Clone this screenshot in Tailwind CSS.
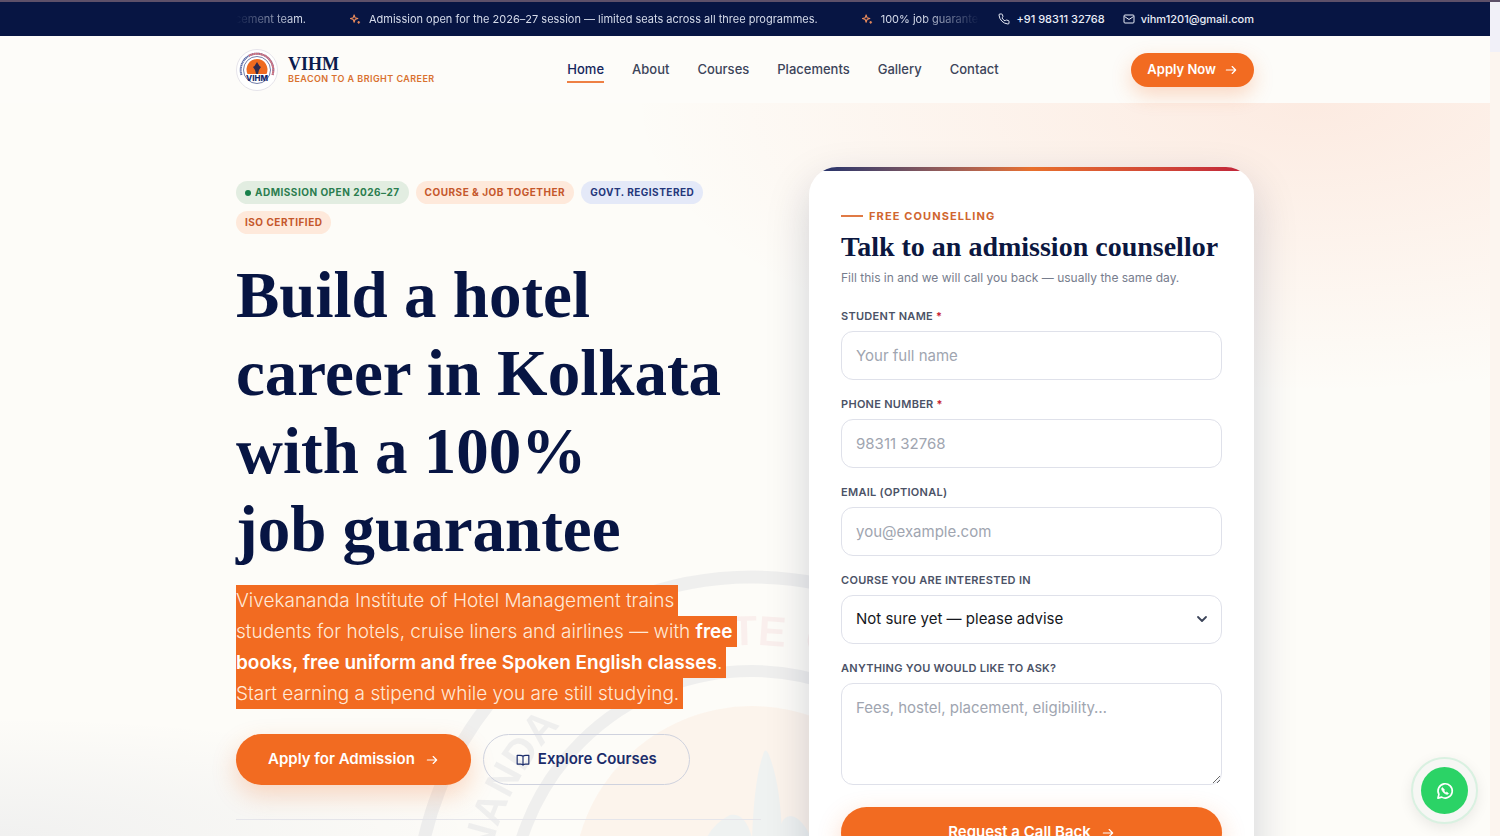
<!DOCTYPE html>
<html lang="en">
<head>
  <meta charset="UTF-8" />
  <meta name="viewport" content="width=device-width, initial-scale=1" />
  <title>VIHM - Beacon to a Bright Career</title>
  <script src="https://cdn.jsdelivr.net/npm/@tailwindcss/browser@4"></script>
  <style>
    body { font-family: 'Inter', 'Liberation Sans', sans-serif; }
    h1, h2, .serif { font-family: 'Liberation Serif', serif; }
    .ticker { mask-image: linear-gradient(90deg, transparent, #000 8%, #000 92%, transparent); }
    .hero {
      background:
        radial-gradient(680px 290px at 88% 0%, rgba(248, 110, 60, 0.12), transparent 100%),
        radial-gradient(520px 120px at 0% 100%, rgba(12, 30, 90, 0.05), transparent 100%),
        #fdfcf8;
    }
  </style>
</head>
<body class="bg-[#fdfcf8] text-[#3c4459]">
  <div class="h-screen flex flex-col overflow-hidden">
    <div class="h-[2px] shrink-0 bg-[#5d5069]"></div>
    <div class="flex flex-1 min-h-0">
      <div class="flex-1 min-w-0 flex flex-col overflow-hidden">

        <!-- Announcement bar -->
        <div class="bg-[#071543] text-[#d5dbea] shrink-0">
          <div class="max-w-[1018px] mx-auto h-[34px] flex items-center gap-[18px] text-[11px]">
            <div class="ticker flex-1 min-w-0 overflow-hidden flex justify-start gap-11 whitespace-nowrap">
              <span class="w-[70px] shrink-0 flex justify-end">placement team.</span>
              <span class="flex shrink-0 items-center gap-2">
                <svg class="size-[11px] text-[#e88a5c]" viewBox="0 0 24 24" fill="none" stroke="currentColor" stroke-width="2.4" stroke-linejoin="round"><path d="M9 2l2 6 6 2-6 2-2 6-2-6-6-2 6-2zM19 15v6M16 18h6" /></svg>
                Admission open for the 2026–27 session — limited seats across all three programmes.
              </span>
              <span class="flex shrink-0 items-center gap-2">
                <svg class="size-[11px] text-[#e88a5c]" viewBox="0 0 24 24" fill="none" stroke="currentColor" stroke-width="2.4" stroke-linejoin="round"><path d="M9 2l2 6 6 2-6 2-2 6-2-6-6-2 6-2zM19 15v6M16 18h6" /></svg>
                100% job guarantee
              </span>
            </div>
            <a href="tel:+919831132768" class="flex items-center gap-[6px] font-medium text-[#e9edf7]">
              <svg class="size-3" viewBox="0 0 24 24" fill="none" stroke="currentColor" stroke-width="2" stroke-linejoin="round"><path d="M22 17v3a2 2 0 0 1-2.200 2A19.800 19.800 0 0 1 2 4.200 2 2 0 0 1 4 2h3a2 2 0 0 1 2 1.700c.1 1 .4 1.900.7 2.800a2 2 0 0 1-.5 2.100L8 9.900a16 16 0 0 0 6 6l1.300-1.300a2 2 0 0 1 2.100-.4c.9.3 1.800.6 2.800.7A2 2 0 0 1 22 17z" /></svg>
              +91 98311 32768
            </a>
            <a href="mailto:vihm1201@gmail.com" class="flex items-center gap-[6px] font-medium text-[#e9edf7]">
              <svg class="size-3" viewBox="0 0 24 24" fill="none" stroke="currentColor" stroke-width="2" stroke-linejoin="round"><rect x="2" y="4" width="20" height="16" rx="2" /><path d="M3 7l9 6 9-6" /></svg>
              vihm1201@gmail.com
            </a>
          </div>
        </div>

        <!-- Navbar -->
        <header class="relative z-10 shrink-0 bg-[#fdfcf9]">
          <div class="max-w-[1018px] mx-auto h-[67px] flex items-center justify-between">
            <a href="#" class="flex items-center gap-[10px]">
              <svg class="size-[42px]" viewBox="0 0 42 42">
                <circle cx="21" cy="21" r="20.500" fill="#fff" stroke="#e6e4ea" />
                <path d="M5.500 26A16.300 16.300 0 1 1 36.500 26" fill="none" stroke="#5d6ba5" stroke-width="2" stroke-dasharray="1.400 .4" />
                <path d="M13 6.800A16.300 16.300 0 0 1 36.500 26" fill="none" stroke="#d8707a" stroke-width="2" stroke-dasharray="1.400 .4" />
                <circle cx="21" cy="21" r="13.500" fill="none" stroke="#4f5d93" stroke-width=".8" />
                <path d="M11.500 25a10.500 10.500 0 1 1 19 0z" fill="#ee6a1f" />
                <path d="M21 13l2.500 4 1.500 1-2 3-1 4h-2l-1-4-2-3 1.500-1z" fill="#2f2a4d" />
                <text x="21" y="32" text-anchor="middle" font-family="Inter" font-size="8" font-weight="800" fill="#15296b">VIHM</text>
              </svg>
              <span>
                <span class="serif block text-[18px] leading-[18px] font-bold text-[#0b1b4d]">VIHM</span>
                <span class="block text-[9px] leading-3 font-semibold tracking-wider text-[#d9712f]">BEACON TO A BRIGHT CAREER</span>
              </span>
            </a>
            <nav class="flex gap-7 text-[13px] font-medium leading-5">
              <a href="#" class="border-b-2 border-[#ee8044] pt-[2px] pb-[2px] text-[#15265c]">Home</a>
              <a href="#" class="pt-[2px]">About</a>
              <a href="#" class="pt-[2px]">Courses</a>
              <a href="#" class="pt-[2px]">Placements</a>
              <a href="#" class="pt-[2px]">Gallery</a>
              <a href="#" class="pt-[2px]">Contact</a>
            </nav>
            <button class="h-[34px] px-4 rounded-full bg-[#f26b21] text-white text-[13px] font-semibold flex items-center gap-2 shadow-[0_8px_20px_rgba(242,107,33,0.25)]">
              Apply Now
              <svg class="size-[14px]" viewBox="0 0 24 24" fill="none" stroke="currentColor" stroke-width="2" stroke-linecap="round" stroke-linejoin="round"><path d="M4 12h16M14 6l6 6-6 6" /></svg>
            </button>
          </div>
        </header>

        <!-- Hero -->
        <main class="hero relative flex-1 min-h-0 overflow-hidden">
          <div class="max-w-[1018px] mx-auto relative pt-16 grid grid-cols-[1.18fr_1fr] gap-12 items-start">
            <svg class="absolute left-[174px] top-[462px] size-[696px] opacity-5" viewBox="0 0 696 696">
              <circle cx="342" cy="348" r="336" fill="none" stroke="#0b1b4d" stroke-width="13" />
              <circle cx="342" cy="348" r="242" fill="none" stroke="#0b1b4d" stroke-width="12" />
              <circle cx="342" cy="320" r="179" fill="#f26b21" />
              <path d="M342 275q2-60 11-85 2-9 6 0 12 30 13 85z" fill="#0b4d7d" />
              <path d="M290 300q2-36 30-50 22-4 26 50zM366 300q0-36 8-46 6-6 14 0 16 14 20 46z" fill="#0b4d7d" />
              <path id="ring" d="M74 348A268 268 0 0 1 610 348" fill="none" />
              <g font-family="Liberation Sans Narrow, Liberation Sans" font-weight="700" font-size="42">
                <text fill="#0b1b4d" text-anchor="end"><textPath href="#ring" startOffset="208">VIVEKANANDA</textPath></text>
                <text fill="#c8202f" text-anchor="end"><textPath href="#ring" startOffset="454">INSTITUTE</textPath></text>
                <text fill="#c8202f"><textPath href="#ring" startOffset="472">OF HOTEL</textPath></text>
              </g>
            </svg>

            <section class="relative pt-[14px]">
              <div class="flex flex-wrap gap-[7px] text-[10px] leading-[23px] font-bold tracking-wider">
                <span class="rounded-full bg-[#e2ede1] px-[9px] text-[#2b7d4f] flex items-center gap-1"><i class="size-[6px] rounded-full bg-[#17804a]"></i>ADMISSION OPEN 2026–27</span>
                <span class="rounded-full bg-[#fee9db] px-[9px] text-[#c5572b]">COURSE &amp; JOB TOGETHER</span>
                <span class="rounded-full bg-[#e4e9f8] px-[9px] text-[#24377b]">GOVT. REGISTERED</span>
                <span class="rounded-full bg-[#fee9db] px-[9px] text-[#c5572b]">ISO CERTIFIED</span>
              </div>
              <h1 class="mt-[22px] text-[65px] leading-[78px] font-bold text-[#071543]">Build a hotel<br />career in Kolkata<br />with a 100%<br />job guarantee</h1>
              <p class="mt-[17px] max-w-[500px] text-[19px] leading-[31px] font-light text-[#ffe9d8]">
                <span class="bg-[#f26b21] box-decoration-clone py-1 pr-1">Vivekananda Institute of Hotel Management trains students for hotels, cruise liners and airlines — with <strong class="font-semibold text-white">free books, free uniform and free Spoken English classes</strong>. Start earning a stipend while you are still studying.</span>
              </p>
              <div class="mt-[25px] flex gap-3 text-[15px] font-semibold">
                <button class="h-[51px] px-8 rounded-full bg-[#f26b21] text-white flex items-center gap-[10px] shadow-[0_10px_24px_rgba(242,107,33,0.25)]">
                  Apply for Admission
                  <svg class="size-[14px]" viewBox="0 0 24 24" fill="none" stroke="currentColor" stroke-width="2" stroke-linecap="round" stroke-linejoin="round"><path d="M4 12h16M14 6l6 6-6 6" /></svg>
                </button>
                <button class="h-[51px] px-8 rounded-full border border-[#cfd2de] text-[#1b2c6b] flex items-center gap-2">
                  <svg class="size-[14px]" viewBox="0 0 24 24" fill="none" stroke="currentColor" stroke-width="2" stroke-linejoin="round"><path d="M12 6v15M12 6c-1-2-3-2-5-2H2v15h6c2 0 4 0 4 2 0-2 2-2 4-2h6V4h-5c-2 0-4 0-5 2z" /></svg>
                  Explore Courses
                </button>
              </div>
              <hr class="mt-[34px] border-[#e5e5ea]" />
            </section>

            <!-- Enquiry form -->
            <form class="relative rounded-[28px] overflow-hidden bg-white px-8 pt-[41px] pb-10 shadow-[0_16px_44px_rgba(7,21,67,0.18)]">
              <div class="absolute inset-x-0 top-0 h-1 bg-linear-to-r from-[#1b2c6b] via-[#e8702c] to-[#bf1f3a]"></div>
              <p class="flex items-center gap-[6px] text-[11px] leading-4 font-bold tracking-widest text-[#d0662f]"><span class="w-[22px] h-[2px] bg-[#e07a45]"></span>FREE COUNSELLING</p>
              <h2 class="mt-[7px] text-[28px] leading-8 font-bold text-[#0b1740] whitespace-nowrap">Talk to an admission counsellor</h2>
              <p class="mt-[5px] text-[12px] leading-5 text-[#777d8d]">Fill this in and we will call you back — usually the same day.</p>

              <div class="mt-5 flex flex-col gap-4">
                <div>
                  <label for="name" class="block mb-[7px] text-[11px] leading-4 font-semibold tracking-wide text-[#4b5266]">STUDENT NAME <span class="text-[#c8202f]">*</span></label>
                  <input id="name" type="text" placeholder="Your full name" class="block w-full h-[49px] px-[14px] rounded-xl border border-[#dfe1ea] text-[15px] placeholder:text-[#a0a5b0]" />
                </div>
                <div>
                  <label for="phone" class="block mb-[7px] text-[11px] leading-4 font-semibold tracking-wide text-[#4b5266]">PHONE NUMBER <span class="text-[#c8202f]">*</span></label>
                  <input id="phone" type="tel" placeholder="98311 32768" class="block w-full h-[49px] px-[14px] rounded-xl border border-[#dfe1ea] text-[15px] placeholder:text-[#a0a5b0]" />
                </div>
                <div>
                  <label for="email" class="block mb-[7px] text-[11px] leading-4 font-semibold tracking-wide text-[#4b5266]">EMAIL (OPTIONAL)</label>
                  <input id="email" type="email" placeholder="you@example.com" class="block w-full h-[49px] px-[14px] rounded-xl border border-[#dfe1ea] text-[15px] placeholder:text-[#a0a5b0]" />
                </div>
                <div>
                  <label for="course" class="block mb-[7px] text-[11px] leading-4 font-semibold tracking-wide text-[#4b5266]">COURSE YOU ARE INTERESTED IN</label>
                  <div class="relative">
                    <select id="course" class="block appearance-none w-full h-[49px] px-[14px] rounded-xl border border-[#dfe1ea] bg-white text-[15px] text-[#15171c]">
                      <option>Not sure yet — please advise</option>
                    </select>
                    <svg class="absolute right-[14px] top-[18px] size-3 text-[#3c4459]" viewBox="0 0 12 12" fill="none" stroke="currentColor" stroke-width="1.800" stroke-linecap="round" stroke-linejoin="round"><path d="M2 4l4 4 4-4" /></svg>
                  </div>
                </div>
                <div>
                  <label for="message" class="block mb-[7px] text-[11px] leading-4 font-semibold tracking-wide text-[#4b5266]">ANYTHING YOU WOULD LIKE TO ASK?</label>
                  <textarea id="message" placeholder="Fees, hostel, placement, eligibility…" class="block w-full h-[102px] resize-y px-[14px] py-3 rounded-xl border border-[#dfe1ea] text-[15px] leading-6 placeholder:text-[#a0a5b0]"></textarea>
                </div>
              </div>
              <button type="button" class="mt-[22px] w-full h-[51px] rounded-full bg-[#f26b21] text-white text-[15px] font-semibold flex items-center justify-center gap-[10px] shadow-[0_8px_24px_rgba(242,107,33,0.25)]">
                Request a Call Back
                <svg class="size-[14px]" viewBox="0 0 24 24" fill="none" stroke="currentColor" stroke-width="2" stroke-linecap="round" stroke-linejoin="round"><path d="M4 12h16M14 6l6 6-6 6" /></svg>
              </button>
            </form>
          </div>

          <!-- WhatsApp -->
          <a href="#" aria-label="WhatsApp" class="absolute right-[12px] bottom-[12px] size-[67px] rounded-full border-2 border-[#d9f1e1] bg-[#f6f7f4] flex items-center justify-center shadow-[0_4px_14px_rgba(0,0,0,0.08)]">
            <span class="size-[47px] rounded-full bg-[#2bd366] flex items-center justify-center">
              <svg class="size-[18px]" viewBox="0 0 24 24" fill="none" stroke="#fff" stroke-width="2.200" stroke-linejoin="round"><path d="M2.500 21.500l1.400-5A9.500 9.500 0 1 1 7.600 20.200z" /><path d="M8.500 7.200c-.9.6-1.300 1.700-.9 2.900 1 3 3.300 5.400 6.300 6.300 1.200.4 2.400-.1 2.900-1l-2.400-2-1.300.9c-1.100-.5-2-1.400-2.500-2.500l.9-1.200z" fill="#fff" stroke-width=".8" /></svg>
            </span>
          </a>
        </main>
      </div>
      <!-- Page edge -->
      <div class="w-[10px] shrink-0 bg-[#fcf5ef]"><div class="h-[50px] bg-[#f1f0f8]"></div></div>
    </div>
  </div>
</body>
</html>
